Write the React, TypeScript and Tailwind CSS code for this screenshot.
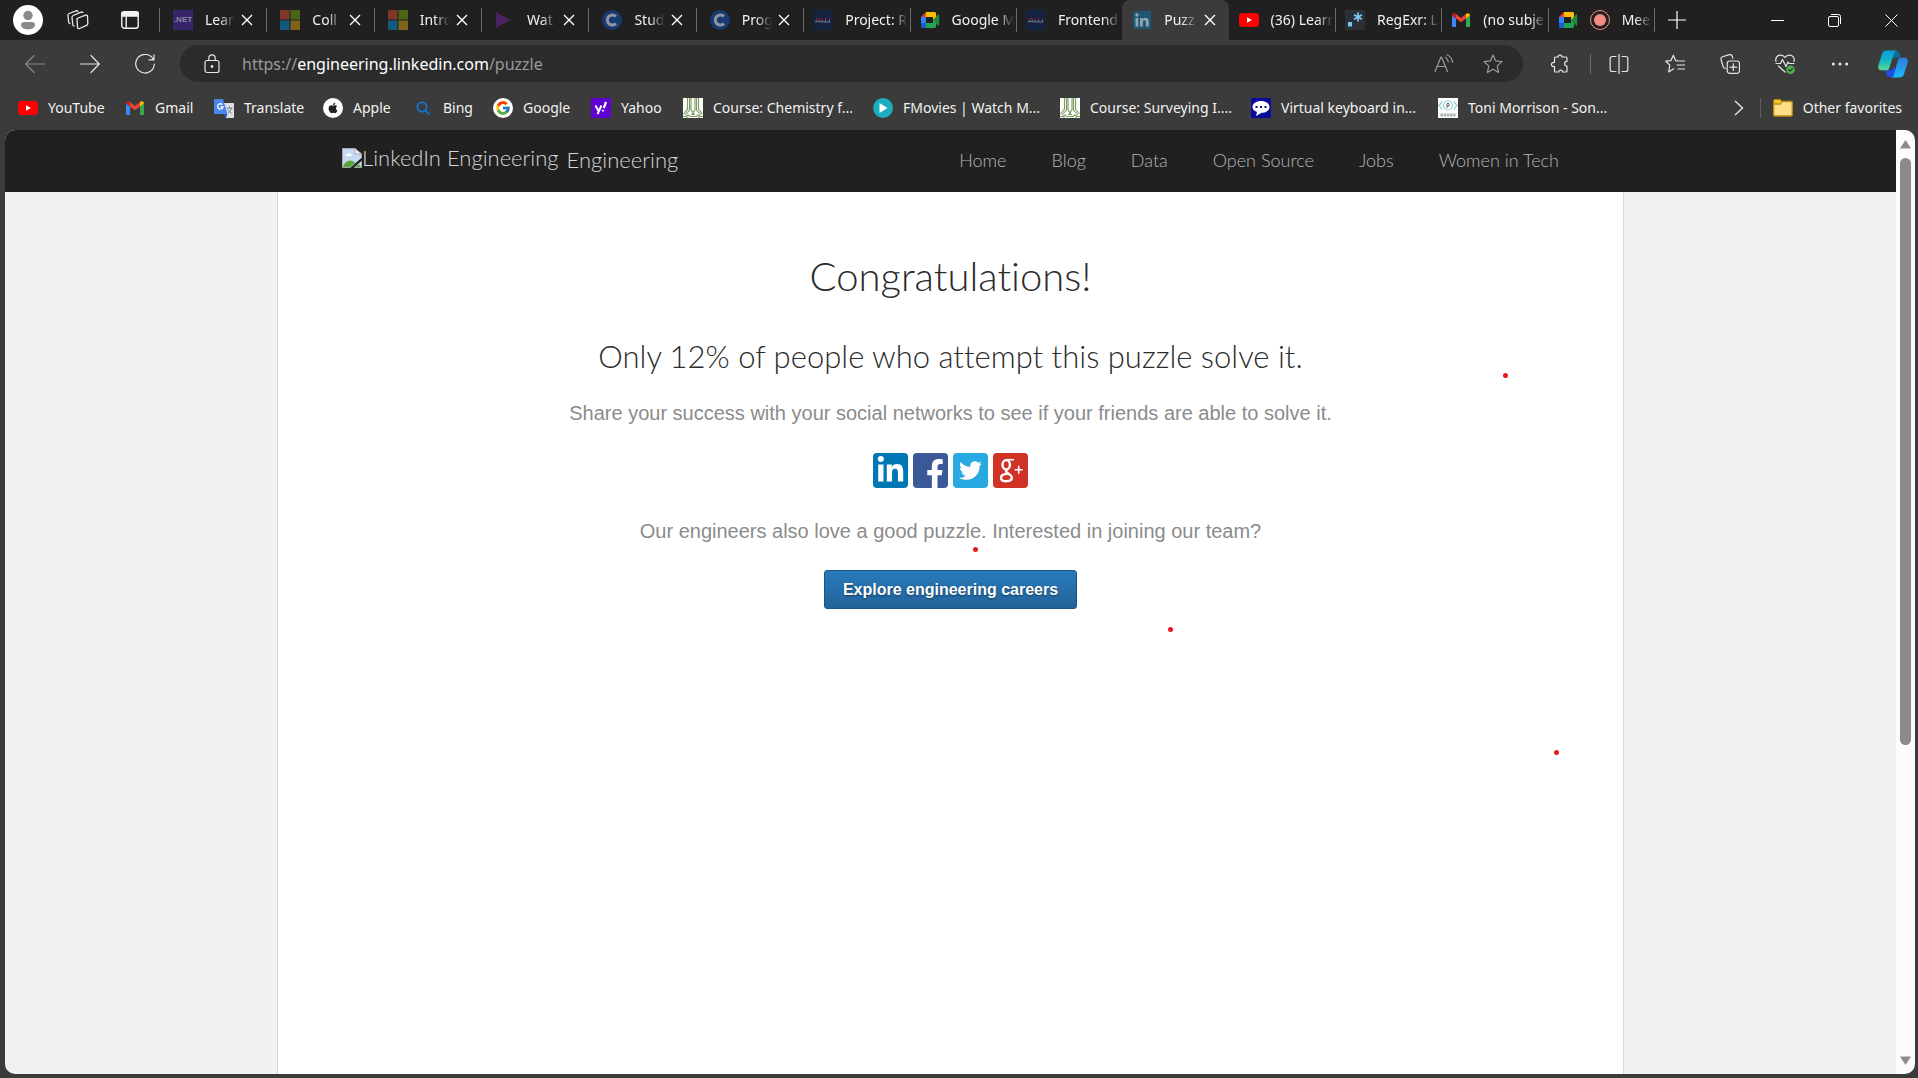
import type { ReactNode } from 'react';
import { FaApple, FaFacebookF, FaLinkedin, FaLinkedinIn, FaTwitter } from 'react-icons/fa';
import { FcGoogle } from 'react-icons/fc';

/* ---------- favicons ---------- */

const DotNet = () => (
  <span className="flex size-5 items-center justify-center bg-[#37246b] font-['Liberation_Sans'] text-[8px] font-bold text-[#8d84a8]">
    .NET
  </span>
);

const Microsoft = () => (
  <svg viewBox="0 0 20 20" className="size-5">
    <path fill="#7f3826" d="M0 0h9.500v9.500H0z" />
    <path fill="#4a6516" d="M10.500 0H20v9.500h-9.500z" />
    <path fill="#125a7c" d="M0 10.500h9.500V20H0z" />
    <path fill="#80631a" d="M10.500 10.500H20V20h-9.500z" />
  </svg>
);

const PurplePlay = () => (
  <svg viewBox="0 0 20 20" className="size-5">
    <path fill="#4b2466" d="M1 2l14.500 8L1 18z" />
  </svg>
);

const CircleC = () => (
  <svg viewBox="0 0 20 20" className="size-5">
    <circle cx="10" cy="10" r="10" fill="#173a70" />
    <path d="M14 6.600A5 5 0 1 0 14 13.400" fill="none" stroke="#8e959f" strokeWidth="3" />
  </svg>
);

const Alu = () => (
  <svg viewBox="0 0 20 20" className="size-5">
    <path fill="#14233f" d="M0 0h20v20H0z" />
    <g fill="none" strokeWidth="1.200">
      <path stroke="#7a2030" d="M3 10l2-2 2 2M9 8v2M12.500 8v2M16.500 8v2" />
      <path stroke="#6d7687" d="M3 12.500V10.500M7 12.500V10.500M3.500 11.300h3M9 10v2h3M12.500 10v2h4v-2" />
    </g>
  </svg>
);

const Meet = () => (
  <svg viewBox="0 0 20 20" className="size-5">
    <path fill="#ea4335" d="M1 7l5-5v5z" />
    <path fill="#fbbc04" d="M6 2h8.500c.8 0 1.500.7 1.500 1.500V9l-3 1V7H6z" />
    <path fill="#2684fc" d="M1 7h5v6H1z" />
    <path fill="#1a5fd0" d="M1 13h5v5H2.500C1.700 18 1 17.300 1 16.500z" />
    <path fill="#23a455" d="M6 13h7v-3l3 1v5.500c0 .8-.7 1.500-1.500 1.500H6z" />
    <path fill="#1f8a3f" d="M13 10l5-5.500c.5-.4 1.200-.2 1.200.5v10c0 .7-.7.900-1.200.5z" />
  </svg>
);

const LinkedInTab = () => (
  <svg viewBox="0 0 20 20" className="size-5">
    <rect x="1" y="1" width="18" height="18" rx="1.500" fill="#1f5674" />
    <path fill="#8fa6b3" d="M3.500 8h2.800v8.500H3.500zM8 8h2.600v1.200c.5-.9 1.500-1.500 2.800-1.500 2.500 0 3.300 1.600 3.300 4v4.800h-2.800v-4.300c0-1.200-.3-2-1.400-2-1.200 0-1.700.9-1.700 2.100v4.200H8z" />
    <circle cx="4.900" cy="5" r="1.700" fill="#8fa6b3" />
  </svg>
);

const YouTube = () => (
  <svg viewBox="0 0 20 20" className="size-5">
    <rect y="3" width="20" height="14" rx="3.500" fill="#f00" />
    <path fill="#fff" d="M8 7.300l5 2.700-5 2.700z" />
  </svg>
);

const RegExr = () => (
  <svg viewBox="0 0 20 20" className="size-5">
    <path fill="#2a3036" d="M0 0h20v20H0z" />
    <path fill="#79c4f7" d="M3 12h4v4.500H3z" />
    <path stroke="#79c4f7" strokeWidth="1.800" d="M13 2.500v9M9 4.700l8 4.600M17 4.700L9 9.300" />
  </svg>
);

const Gmail = () => (
  <svg viewBox="0 0 20 20" className="size-5">
    <path fill="#4285f4" d="M1 5.500l4 3V17H2.300C1.500 17 1 16.400 1 15.700z" />
    <path fill="#34a853" d="M19 5.500l-4 3V17h2.700c.8 0 1.300-.6 1.300-1.300z" />
    <path fill="#c5221f" d="M1 5.500C1 3.500 3 2.600 4.500 3.700L5 4.100v4.400l-4-3z" />
    <path fill="#fbbc04" d="M19 5.500c0-2-2-2.900-3.500-1.800l-.5.400v4.400l4-3z" />
    <path fill="#ea4335" d="M5 4.100l5 3.800 5-3.800v4.400l-5 3.800-5-3.800z" />
  </svg>
);

const Translate = () => (
  <svg viewBox="0 0 20 20" className="size-5">
    <path fill="#dcdfe3" d="M8 5h11c.6 0 1 .4 1 1v13c0 .6-.4 1-1 1h-7z" />
    <path fill="#4b86ee" d="M1 1h8l4.500 15H1c-.6 0-1-.4-1-1V2c0-.6.400-1 1-1z" />
    <path fill="#2a56c6" d="M9.500 16h4L12 20z" />
    <path d="M8.300 6.600A2.700 2.700 0 1 0 9 8.800H6.500" fill="none" stroke="#fff" strokeWidth="1.300" />
    <path d="M12.500 10h6M15.500 8.500V10M17.500 10c-.5 2.500-2 4-3.500 5M13.800 11.500c.8 1.800 2.200 3 4 3.800" fill="none" stroke="#6d7f8c" />
  </svg>
);

const Apple = () => (
  <span className="flex size-5 items-center justify-center rounded-full bg-white">
    <FaApple className="size-3 text-[#222]" />
  </span>
);

const Bing = () => (
  <svg viewBox="0 0 20 20" className="size-5" fill="none" stroke="#1673cf" strokeWidth="1.800">
    <circle cx="9" cy="9" r="4.600" />
    <path d="M12.500 12.500l4 4" />
  </svg>
);

const Google = () => (
  <span className="flex size-5 items-center justify-center rounded-full bg-white">
    <FcGoogle className="size-4" />
  </span>
);

const Yahoo = () => (
  <svg viewBox="0 0 20 20" className="size-5" fill="none" stroke="#fff">
    <path fill="#6001d2" stroke="none" d="M0 0h20v20H0z" />
    <path strokeWidth="2" d="M4.500 7.500l3 5.500M10.500 7.500L6.500 16" />
    <path strokeWidth="2.200" d="M15 4l-2.200 6" />
    <circle cx="12" cy="12.600" r=".7" fill="#fff" />
  </svg>
);

const Course = () => (
  <svg viewBox="0 0 20 20" className="size-5">
    <path fill="#fbfdf9" d="M0 0h20v20H0z" />
    <g fill="none" stroke="#7c9b63" strokeWidth="1.100">
      <path d="M4.500 0v11L.5 16M6.500 0v12L2 17M8 0v11.500l3 5M12 0v11.500l-3 5M13.500 0v12l4.500 5M15.500 0v11l4 5" />
      <path d="M0 18.500h3l2-1.500 2 1.500h6l2-1.500 2 1.500h3M4 20v-1.500M16 20v-1.500M8 16.500h4" />
    </g>
  </svg>
);

const FMovies = () => (
  <svg viewBox="0 0 20 20" className="size-5">
    <circle cx="10" cy="10" r="10" fill="#1aaebf" />
    <path fill="#fff" d="M6.500 5l8 5-8 5z" />
  </svg>
);

const Keyboard = () => (
  <svg viewBox="0 0 20 20" className="size-5">
    <path fill="#0a0a9c" d="M0 0h20v20H0z" />
    <path fill="#fff" d="M10 3c4.700 0 8.500 2.500 8.500 6s-3.800 5.800-8 5.800L5 18l1-4C3 13 1.500 11.300 1.500 9c0-3.500 3.800-6 8.500-6z" />
    <path fill="#0a0a9c" d="M4.500 8h2v2h-2zM9 8h2v2H9zM13.500 8h2v2h-2z" />
  </svg>
);

const Prime = () => (
  <svg viewBox="0 0 20 20" className="size-5">
    <path fill="#fff" d="M0 0h20v20H0z" />
    <g fill="none" stroke="#8fcccc" strokeWidth="1.200">
      <circle cx="10" cy="7.500" r="4.500" />
      <path d="M4 3.500C2.500 5 3 6.500.5 7.500 3 8.500 2.500 10 4 11.500M16 3.500c1.500 1.500 1 3 3.500 4-2.500 1-2 2.500-3.500 4" />
    </g>
    <path d="M9 10V5.500h2V8H9" fill="none" stroke="#667" />
    <path d="M2.500 17h15" stroke="#a8b0b0" strokeWidth="3" strokeDasharray="2.500 .7" />
  </svg>
);

const Folder = () => (
  <svg viewBox="0 0 20 20" className="size-5">
    <path fill="#f5c726" stroke="#b8860b" d="M.7 2.500c0-.6.400-1 1-1h5.500L9 3.500v3H.7z" />
    <path fill="#ffe08a" stroke="#c08f10" strokeWidth="1.300" d="M.7 6h6.500l2-2.500h9c.6 0 1 .4 1 1V17c0 .6-.4 1-1 1H1.700c-.6 0-1-.4-1-1z" />
  </svg>
);

/* ---------- outline icons ---------- */

function Line({ children, className = 'text-[#e6e6e6]' }: { children: ReactNode; className?: string }) {
  return (
    <svg
      viewBox="0 0 20 20"
      fill="none"
      stroke="currentColor"
      strokeWidth="1.200"
      strokeLinecap="round"
      strokeLinejoin="round"
      className={`size-5 shrink-0 ${className}`}
    >
      {children}
    </svg>
  );
}

const starPath = 'M10 1l2.600 5.900 6.400.7-4.800 4.300 1.400 6.500L10 15.200l-5.600 3.200 1.400-6.500L1 7.600l6.400-.7z';

const Copilot = () => (
  <svg viewBox="0 0 30 28" className="h-7 w-[30px]">
    <defs>
      <linearGradient id="cpLeft" x1="0" y1="0" x2="0" y2="1">
        <stop offset="0" stopColor="#0a9fe0" />
        <stop offset=".5" stopColor="#12b5c4" />
        <stop offset="1" stopColor="#5edc94" />
      </linearGradient>
      <linearGradient id="cpRight" x1="0" y1="0" x2="0" y2="1">
        <stop offset="0" stopColor="#2b7be0" />
        <stop offset="1" stopColor="#1cbcfb" />
      </linearGradient>
    </defs>
    <path fill="#0c6d97" d="M15 1h3c2.500 0 3.500 1.500 4 4l.5 2.500H18L14 9z" />
    <path fill="#1f4fe0" d="M7.500 20h6.500l3-4 1 10c-.5.900-1.500 1-3 1h-3c-2.500 0-3.300-1.500-3.800-4z" />
    <path fill="url(#cpLeft)" d="M8.500.5H19c-2 .5-2.800 2-3.500 4l-4 13c-.6 2-1.500 2.800-3.500 2.800H3.500C.5 20.300-.3 18 .5 15L4 4C4.800 1.500 6 .5 8.500.5z" />
    <path fill="url(#cpRight)" d="M21.500 27.500H13c2 0 2.800-2 3.500-4l3-12.500c.6-2 1.500-3.300 3.500-3.300h3.500c3 0 3.800 2.300 3 5.300l-3.500 11c-.8 2.500-2 3.500-4.500 3.500z" />
  </svg>
);

const BrokenImage = () => (
  <svg viewBox="0 0 20 20" className="size-5" aria-hidden="true">
    <path fill="#c5d9f5" stroke="#a9a9a9" d="M.5.500H13L19.500 6v13.500H.5z" />
    <path fill="#fff" d="M4 7.500c0-1 1-1.500 1.600-1.200C6 5 8.500 5 9 6.500c1 0 1.200 1 .8 1.500H4.200z" />
    <path fill="#57a639" d="M1 19c.5-3.500 4-6.500 7.500-6.500 2 0 3.500 1 4.500 2.500L8 19z" />
    <path fill="#f4f4f4" stroke="#a9a9a9" d="M13 .5V6h6.500z" />
    <path fill="#202020" d="M20 9.500v3L11.500 20H8z" />
    <path fill="#57a639" d="M13.500 19l3-2.700c1 .7 2 1.700 2.500 2.700z" />
  </svg>
);

/* ---------- tab strip ---------- */

type Tab = { title: string; icon: ReactNode; close?: boolean; active?: boolean; recording?: boolean; bare?: boolean };

const tabs: Tab[] = [
  { title: 'Lear', icon: <DotNet />, close: true },
  { title: 'Coll', icon: <Microsoft />, close: true },
  { title: 'Intro', icon: <Microsoft />, close: true },
  { title: 'Wat', icon: <PurplePlay />, close: true },
  { title: 'Stud', icon: <CircleC />, close: true },
  { title: 'Prog', icon: <CircleC />, close: true },
  { title: 'Project: R', icon: <Alu /> },
  { title: 'Google M', icon: <Meet /> },
  { title: 'Frontend', icon: <Alu /> },
  { title: 'Puzz', icon: <LinkedInTab />, close: true, active: true },
  { title: '(36) Learn', icon: <YouTube />, bare: true },
  { title: 'RegExr: L', icon: <RegExr /> },
  { title: '(no subje', icon: <Gmail /> },
  { title: 'Mee', icon: <Meet />, recording: true },
];

function TabItem({ tab }: { tab: Tab }) {
  const edge = tab.active || tab.bare ? 'border-transparent' : 'border-[#6a6a6a]';
  const size = tab.close && !tab.active ? 'grow-[215]' : 'grow-[213]';
  const pad = tab.close && !tab.active ? 'pl-[13px]' : 'pl-[9px]';
  return (
    <div className={`flex h-10 min-w-0 basis-0 items-center ${size} ${tab.active ? 'rounded-t-lg bg-[#3b3b3b]' : ''}`}>
      <div className={`flex h-6 min-w-0 flex-1 items-center border-l ${edge} ${pad}`}>
        <button className="flex min-w-0 flex-1 items-center gap-3">
          <span className="shrink-0">{tab.icon}</span>
          {tab.recording && (
            <span className="flex size-5 shrink-0 items-center justify-center rounded-full border border-[#f28b82]">
              <span className="size-3 rounded-full bg-[#f28b82]" />
            </span>
          )}
          <span className="min-w-0 flex-1 overflow-hidden whitespace-nowrap text-left [mask-image:linear-gradient(to_left,transparent,black_16px)]">
            {tab.title}
          </span>
        </button>
        {tab.close ? (
          <button aria-label={`Close ${tab.title}`} className="ml-1 mr-[11px] flex size-4 shrink-0 items-center justify-center text-white">
            <svg viewBox="0 0 12 12" className="size-3" stroke="currentColor" strokeWidth="1.400">
              <path d="M1 1l10 10M11 1L1 11" />
            </svg>
          </button>
        ) : (
          <span className="w-0.5 shrink-0" />
        )}
      </div>
    </div>
  );
}

function TabStrip() {
  return (
    <div className="flex h-10 items-center bg-[#202020]">
      <div className="flex w-[159px] shrink-0 items-center pl-[13px]">
        <button aria-label="Profile" className="flex size-[30px] items-center justify-center rounded-full bg-white">
          <svg viewBox="0 0 30 30" className="size-[30px]" fill="#8a8a8a">
            <circle cx="15" cy="10.500" r="4.700" />
            <path d="M8 20c0-2 1.300-3 3-3h8c1.700 0 3 1 3 3 0 2.800-3 4.300-7 4.300S8 22.800 8 20z" />
          </svg>
        </button>
        <button aria-label="Workspaces" className="ml-6">
          <svg viewBox="0 0 22 20" className="h-5 w-[22px]" fill="none" stroke="#e8e8e8" strokeWidth="1.300" strokeLinejoin="round">
            <path d="M10 8.500l8.500-3.300c1-.3 1.800 0 2 1l.3 7.300c0 .9-.4 1.500-1.200 1.800l-7.100 3.200c-1.100.5-2 0-2-1.200z" />
            <path d="M7.500 16c-1 .2-1.600-.3-1.700-1.200L5 7.500c0-1 .4-1.600 1.200-2L14 2.200c1-.4 1.800-.1 2.200.9" />
            <path d="M3.500 13.500c-1 .2-1.700-.3-1.800-1.200L1 5.500c0-1 .4-1.600 1.200-2L9 .9c1-.3 1.700-.1 2.100.8" />
          </svg>
        </button>
        <button aria-label="Tab actions" className="ml-8">
          <svg viewBox="0 0 18 18" className="size-[18px]" fill="none" stroke="#f2f2f2" strokeWidth="1.400">
            <rect x=".8" y=".8" width="16.400" height="16.400" rx="2.500" />
            <path d="M1 1.500h16v3.500H1z" fill="#f2f2f2" />
            <path d="M5.200 5v12" />
          </svg>
        </button>
      </div>
      <div className="flex min-w-0 flex-1">
        {tabs.map((t, i) => (
          <TabItem key={i} tab={t} />
        ))}
      </div>
      <div className="flex h-6 w-[264px] shrink-0 items-center justify-between border-l border-[#6a6a6a] pl-[13px] pr-5 text-white">
        <button aria-label="New tab">
          <svg viewBox="0 0 18 18" className="size-[18px]" stroke="currentColor">
            <path d="M9 0v18M0 9h18" strokeWidth="1.200" />
          </svg>
        </button>
        <div className="flex gap-[44px]">
          <button aria-label="Minimize">
            <svg viewBox="0 0 13 13" className="size-[13px]" stroke="currentColor">
              <path d="M0 6.500h13" />
            </svg>
          </button>
          <button aria-label="Restore">
            <svg viewBox="0 0 13 13" className="size-[13px]" fill="none" stroke="currentColor">
              <rect x=".5" y="2.500" width="10" height="10" rx="1.500" />
              <path d="M3 .5h7.500a2 2 0 0 1 2 2V10" />
            </svg>
          </button>
          <button aria-label="Close window">
            <svg viewBox="0 0 13 13" className="size-[13px]" stroke="currentColor">
              <path d="M.5.500l12 12M12.500.5l-12 12" />
            </svg>
          </button>
        </div>
      </div>
    </div>
  );
}

/* ---------- toolbar ---------- */

function Toolbar() {
  return (
    <div className="flex h-[47px] items-center">
      <div className="flex w-[180px] shrink-0 gap-[35px] pl-[25px]">
        <button aria-label="Back">
          <Line className="text-[#868686]">
            <path d="M19.500 10H1M9 1.500L.8 10 9 18.500" />
          </Line>
        </button>
        <button aria-label="Forward">
          <Line>
            <path d="M.5 10H19M11 1.500l8.200 8.500-8.200 8.500" />
          </Line>
        </button>
        <button aria-label="Reload">
          <Line>
            <path d="M18.300 5.500A9.300 9.300 0 1 0 19.300 10M19 .8v5h-5" />
          </Line>
        </button>
      </div>
      <div className="flex h-[37px] min-w-0 flex-1 items-center rounded-full bg-[#2b2b2b] pl-[22px] pr-5">
        <button aria-label="Site information">
          <Line>
            <rect x="3" y="6.500" width="14" height="12" rx="2" />
            <path d="M6.800 6.500V4a3.200 3.200 0 0 1 6.400 0v2.500" />
            <circle cx="10" cy="12.500" r=".8" fill="currentColor" />
          </Line>
        </button>
        <label htmlFor="address" className="ml-5 whitespace-nowrap text-base text-[#9a9a9a]">
          https://<span className="text-white">engineering.linkedin.com</span>/puzzle
        </label>
        <input id="address" type="text" className="min-w-0 flex-1 bg-transparent outline-none" />
        <button aria-label="Read aloud">
          <Line className="text-[#9a9a9a]">
            <path d="M1 17.500L7 3h.5l6 14.500M3 12.500h8.500M11.500 3.500c1.700 1 2.600 2.600 2.800 4.500M13 .8c3.300 1.500 5.200 4.200 5.600 7.700" />
          </Line>
        </button>
        <button aria-label="Add to favorites" className="ml-[29px]">
          <Line className="text-[#9a9a9a]">
            <path d={starPath} />
          </Line>
        </button>
      </div>
      <div className="flex w-[395px] shrink-0 items-center pl-[27px]">
        <button aria-label="Extensions">
          <Line>
            <path d="M5.500 3h2.700C7.800.3 12.200.3 11.800 3H16a1 1 0 0 1 1 1v3.500c-3.200-.6-3.200 5 0 4.500V17a1 1 0 0 1-1 1h-3.500c.3-2.500-4-2.500-3.700 0H5.500a1 1 0 0 1-1-1v-4.500C.3 13 .3 8 4.500 8.500V4a1 1 0 0 1 1-1z" />
          </Line>
        </button>
        <span className="ml-5 h-5 w-px bg-[#6a6a6a]" />
        <button aria-label="Split screen" className="ml-[18px]">
          <Line>
            <path d="M10 0v20M7 2.500H3.200a2 2 0 0 0-2 2v11a2 2 0 0 0 2 2H7M13 2.500h3.800a2 2 0 0 1 2 2v11a2 2 0 0 1-2 2H13" />
          </Line>
        </button>
        <button aria-label="Favorites" className="ml-9">
          <Line>
            <path d="M13 6.800l-2.500-.2L8.300 1.200 6 6.600l-5.200.6 4 3.900L3.700 18l5-3.200M14 7h5.500M12 11h7.500M13 15h6.500" />
          </Line>
        </button>
        <button aria-label="Collections" className="ml-[35px]">
          <Line>
            <rect x="7.200" y="7" width="12.300" height="12.300" rx="2.500" />
            <path d="M13.300 9.800v6.700M10 13.200h6.700M5.500 14.500c-1.200 0-2-.6-2.300-1.800L1 5.500c-.3-1.300.2-2.400 1.500-2.800l7-2c1.200-.3 2.200.1 2.700 1.300l.6 2.200" />
          </Line>
        </button>
        <button aria-label="Browser essentials" className="ml-[35px]">
          <Line>
            <path d="M1 7.500C0 3.500 2.500 1.200 5.500 1.200 7.500 1.200 9 2 10 3.500c1-1.500 2.500-2.300 4.500-2.300 3 0 5.500 2.300 4.500 6.300M1 9.500h4.500l2-4 3.500 7 2-4.500 1 1.500h5M3.500 12l6.500 6" />
            <circle cx="15.500" cy="15.700" r="4.300" fill="#4cb050" stroke="none" />
            <path d="M13.700 15.800l1.300 1.300 2.400-2.500" stroke="#1d3a1e" />
          </Line>
        </button>
        <button aria-label="Settings and more" className="ml-[35px]">
          <Line>
            <g fill="currentColor" stroke="none">
              <circle cx="3.300" cy="10" r="1.600" />
              <circle cx="10" cy="10" r="1.600" />
              <circle cx="16.700" cy="10" r="1.600" />
            </g>
          </Line>
        </button>
        <button aria-label="Copilot" className="ml-[28px]">
          <Copilot />
        </button>
      </div>
    </div>
  );
}

/* ---------- favorites bar ---------- */

const bookmarks: { label: string; icon: ReactNode; width: string }[] = [
  { label: 'YouTube', icon: <YouTube />, width: 'w-[107px]' },
  { label: 'Gmail', icon: <Gmail />, width: 'w-[89px]' },
  { label: 'Translate', icon: <Translate />, width: 'w-[109px]' },
  { label: 'Apple', icon: <Apple />, width: 'w-[90px]' },
  { label: 'Bing', icon: <Bing />, width: 'w-[80px]' },
  { label: 'Google', icon: <Google />, width: 'w-[98px]' },
  { label: 'Yahoo', icon: <Yahoo />, width: 'w-[92px]' },
  { label: 'Course: Chemistry f...', icon: <Course />, width: 'w-[190px]' },
  { label: 'FMovies | Watch M...', icon: <FMovies />, width: 'w-[187px]' },
  { label: 'Course: Surveying I....', icon: <Course />, width: 'w-[191px]' },
  { label: 'Virtual keyboard in...', icon: <Keyboard />, width: 'w-[187px]' },
  { label: 'Toni Morrison - Son...', icon: <Prime />, width: 'w-[190px]' },
];

function Bookmark({ icon, label }: { icon: ReactNode; label: string }) {
  return (
    <a href="#" className="flex items-center gap-2.5 whitespace-nowrap">
      <span className="shrink-0">{icon}</span>
      {label}
    </a>
  );
}

function FavoritesBar() {
  return (
    <div className="flex h-[43px] items-center pb-0.5 pl-[18px] pr-4">
      <div className="flex min-w-0 flex-1 overflow-hidden">
        {bookmarks.map((b) => (
          <div key={b.label} className={`shrink-0 ${b.width}`}>
            <Bookmark icon={b.icon} label={b.label} />
          </div>
        ))}
      </div>
      <button aria-label="More favorites" className="mr-4 flex items-center">
        <svg viewBox="0 0 10 16" className="h-4 w-2.5" fill="none" stroke="#e6e6e6" strokeWidth="1.400">
          <path d="M1 1l7.500 7L1 15" />
        </svg>
      </button>
      <div className="flex h-5 items-center border-l border-[#5f5f5f] pl-3">
        <Bookmark icon={<Folder />} label="Other favorites" />
      </div>
    </div>
  );
}

/* ---------- page ---------- */

const nav = ['Home', 'Blog', 'Data', 'Open Source', 'Jobs', 'Women in Tech'];

function SiteHeader() {
  return (
    <header className="flex h-[62px] shrink-0 justify-center bg-[#202020] font-['Lato',sans-serif] font-light">
      <div className="flex w-full max-w-[1347px] items-center justify-between px-[65px] pb-0.5">
        <a href="#" className="flex items-center gap-2 whitespace-nowrap text-[22px] leading-6 text-[#d6d6d6]">
          <span className="flex items-center pb-1">
            <BrokenImage />
            LinkedIn Engineering
          </span>
          <span>Engineering</span>
        </a>
        <nav className="flex gap-[45px] whitespace-nowrap text-lg leading-6 text-[#b5b5b5]">
          {nav.map((n) => (
            <a key={n} href="#">
              {n}
            </a>
          ))}
        </nav>
      </div>
    </header>
  );
}

const shares: { label: string; color: string; icon: ReactNode }[] = [
  { label: 'LinkedIn', color: 'items-center justify-center bg-[#0077b5]', icon: <FaLinkedinIn className="size-[29px]" /> },
  { label: 'Facebook', color: 'items-end justify-end bg-[#3b5998] pr-1', icon: <FaFacebookF className="h-[29px] w-[18px]" /> },
  { label: 'Twitter', color: 'items-center justify-center bg-[#29a9e1]', icon: <FaTwitter className="size-[23px]" /> },
  {
    label: 'Google Plus',
    color: 'items-center justify-center bg-[#d13226]',
    icon: (
      <svg viewBox="0 0 35 35" className="size-[35px]" fill="none" stroke="currentColor">
        <ellipse cx="13.200" cy="11.800" rx="3.700" ry="4.700" strokeWidth="2.400" />
        <path strokeWidth="1.600" d="M12.500 6.700h8.500" />
        <path strokeWidth="2.400" d="M14 16.500c-1.500 1.500-1 2.500.5 3.500 2.500 1.600 4.300 2.300 4.300 4.600 0 2.400-2.400 3.700-5.500 3.700-3.200 0-5.300-1.300-5.300-3.500 0-2.600 3-3.900 6.800-4" />
        <path strokeWidth="1.600" d="M25.700 12.800v8M21.700 16.800h8" />
      </svg>
    ),
  },
];

function Content() {
  return (
    <main className="flex w-full max-w-[1347px] flex-1 flex-col items-center border-x border-[#d9d9d9] bg-white pt-[60px] text-center font-['Liberation_Sans',sans-serif]">
      <h1 className="font-['Lato',sans-serif] text-[40px] font-light leading-[48px] text-[#2b2b2b] [font-variant-ligatures:none]">
        Congratulations!
      </h1>
      <h2 className="mt-9 font-['Lato',sans-serif] text-[31px] font-light leading-10 text-[#2b2b2b] [font-variant-ligatures:none]">
        Only 12% of people who attempt this puzzle solve it.
      </h2>
      <p className="mt-[23px] text-xl leading-7 text-[#8b8b8b]">
        Share your success with your social networks to see if your friends are able to solve it.
      </p>
      <div className="mt-[26px] flex gap-[5px]">
        {shares.map((s) => (
          <a key={s.label} href="#" aria-label={s.label} className={`flex size-[35px] rounded-sm text-white ${s.color}`}>
            {s.icon}
          </a>
        ))}
      </div>
      <p className="mt-[29px] text-xl leading-7 text-[#8b8b8b]">
        Our engineers also love a good puzzle. Interested in joining our team?
      </p>
      <button className="mt-[25px] h-[39px] rounded-[3px] border border-[#1b5480] bg-linear-to-b from-[#287bbc] to-[#23639a] px-[18px] text-base font-bold text-white [text-shadow:0_1px_2px_rgba(0,0,0,0.5)]">
        Explore engineering careers
      </button>
    </main>
  );
}

function Scrollbar() {
  return (
    <div className="flex w-[19px] shrink-0 flex-col items-center bg-[#fcfcfc] pb-[9px] pt-2.5">
      <svg viewBox="0 0 11 9" className="h-[9px] w-[11px] shrink-0" fill="#8b8b8b">
        <path d="M5.500 0L11 8.500H0z" />
      </svg>
      <div className="min-h-0 w-[11px] flex-1 py-[9px]">
        <div className="h-[66%] rounded-full bg-[#8b8b8b]" />
      </div>
      <svg viewBox="0 0 11 9" className="h-[9px] w-[11px] shrink-0" fill="#8b8b8b">
        <path d="M5.500 9L11 .5H0z" />
      </svg>
    </div>
  );
}

/* Small red pointer marks that lie over the page. */
const marks = ['left-[973px] top-[547px]', 'left-[1503px] top-[373px]', 'left-[1168px] top-[627px]', 'left-[1554px] top-[750px]'];

export default function App() {
  return (
    <div className="relative flex h-screen flex-col overflow-hidden bg-[#3b3b3b] font-['Noto_Sans',sans-serif] text-sm text-[#f2f2f2]">
      <TabStrip />
      <Toolbar />
      <FavoritesBar />
      <div className="mb-1 ml-[5px] mr-[3px] flex min-h-0 flex-1 overflow-hidden rounded-[10px]">
        <div className="flex min-w-0 flex-1 flex-col bg-[#f1f1f1]">
          <SiteHeader />
          <div className="flex flex-1 justify-center">
            <Content />
          </div>
        </div>
        <Scrollbar />
      </div>
      {marks.map((m) => (
        <span key={m} className={`absolute size-[5px] rounded-full bg-[#e8191c] ${m}`} />
      ))}
    </div>
  );
}
